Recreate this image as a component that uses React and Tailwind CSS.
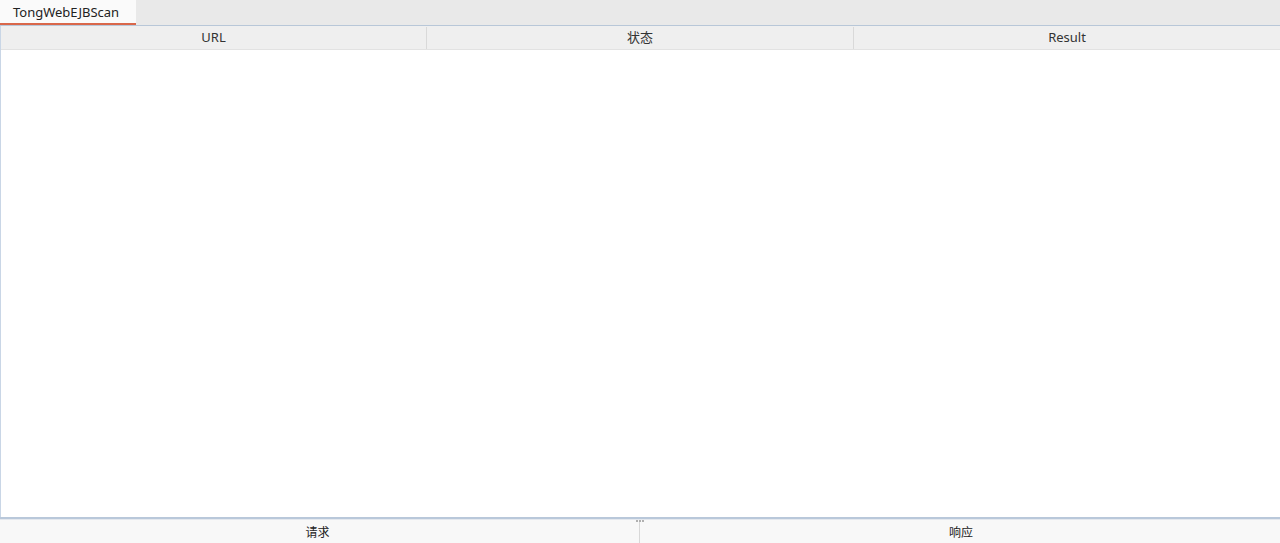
export default function App() {
  const font = { fontFamily: '"Noto Sans", "Noto Sans CJK SC", sans-serif' };
  return (
    <div className="w-[1280px] h-[543px] flex flex-col bg-white overflow-hidden text-[#222]" style={font}>
      {/* tab bar */}
      <div className="h-[26px] flex bg-[#e9e9e9] border-b border-[#b8c7d8]">
        <div className="w-[136px] h-[25px] bg-[#fafafa] border-b-2 border-[#d9674a] flex items-center pl-[13px] pt-[2px] text-[13px] text-[#222]">
          TongWebEJBScan
        </div>
      </div>
      {/* table */}
      <div className="flex-1 flex flex-col border-l border-[#c9d6e6]">
        <div className="h-[24px] flex bg-[#efefef] border-b border-[#e2e2e2] text-[13px] text-[#333] pt-[1px]">
          <div className="w-[426px] flex items-center justify-center border-r border-[#d9d9d9]">URL</div>
          <div className="w-[427px] flex items-center justify-center border-r border-[#d9d9d9]">状态</div>
          <div className="flex-1 flex items-center justify-center">Result</div>
        </div>
        <div className="flex-1 bg-white"></div>
      </div>
      {/* split bar */}
      <div className="h-[2px] bg-[#b9c8da]"></div>
      <div className="relative h-[24px] flex bg-[#f8f8f8] text-[12px] text-[#222] border-t border-[#e4e8ee]">
        <div className="absolute left-[636px] top-[0px] flex gap-[1px]">
          <span className="w-[2px] h-[2px] bg-[#b0b0b0]"></span>
          <span className="w-[2px] h-[2px] bg-[#b0b0b0]"></span>
          <span className="w-[2px] h-[2px] bg-[#b0b0b0]"></span>
        </div>
        <div className="w-[640px] flex items-center justify-center border-r border-[#d8d8d8] pt-[2px] pr-[4px]">请求</div>
        <div className="flex-1 flex items-center justify-center pt-[2px] pl-[2px]">响应</div>
      </div>
    </div>
  );
}
